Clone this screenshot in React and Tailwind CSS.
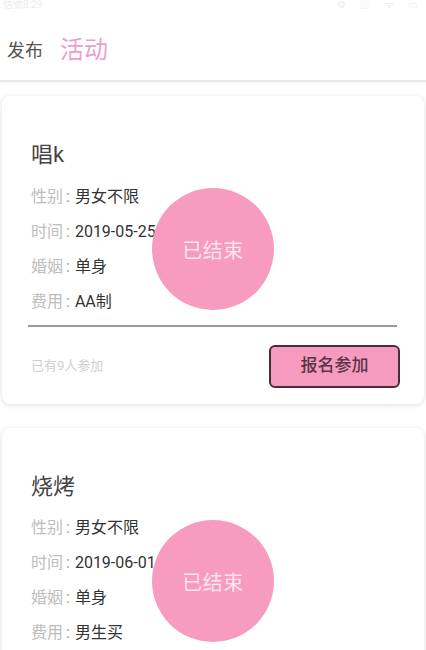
import React from "react";

const font = { fontFamily: 'Roboto, "Noto Sans CJK SC", sans-serif' };

function Row({ label, value }) {
  return (
    <div className="flex items-center h-[35px] pl-[3px] text-[16px]">
      <span className="text-[#bdbdbd]">{label}</span>
      <span className="text-[#9e9e9e] ml-[3px] mr-[5px]">:</span>
      <span className="text-[#333333] text-[16px]">{value}</span>
    </div>
  );
}

function Card({ title, rows, showFooter }) {
  return (
    <div className="relative bg-white rounded-[8px] shadow-[0_1px_5px_rgba(0,0,0,0.14)] px-[26px] pt-[44px] pb-[16px]">
      <div className="pl-[3px] text-[22px] leading-[30px] text-[#444444] mb-[9px]">{title}</div>
      {rows.map((r) => (
        <Row key={r[0]} label={r[0]} value={r[1]} />
      ))}
      <div className="absolute left-[150px] top-[92px] w-[122px] h-[122px] rounded-full bg-[#f79bbf] flex items-center justify-center">
        <span className="text-[20px] text-[#fde6ef] tracking-[0.5px] mt-[4px]">已结束</span>
      </div>
      {showFooter && (
        <>
          <div className="mt-[6px] h-[1.5px] bg-[#9a9a9a] mr-[1px]" />
          <div className="flex items-center justify-between mt-[18px]">
            <span className="pl-[3px] text-[13px] text-[#cfcfcf]">已有9人参加</span>
            <button className="w-[131px] h-[43px] rounded-[6px] border-2 border-[#4a2b3b] bg-[#f59bbd] text-[17px] font-medium text-[#5a3447] mr-[-2px]">
              报名参加
            </button>
          </div>
        </>
      )}
    </div>
  );
}

export default function App() {
  return (
    <div className="w-[426px] h-[650px] overflow-hidden bg-white" style={font}>
      <div className="h-[20px] flex items-start justify-between px-[3px] text-[10px] text-[#ececec]">
        <span className="-mt-[3px]">信號8:29</span>
        <span className="-mt-[3px] tracking-[6px]">⚙ ▥ ᯤ ▭</span>
      </div>
      <div className="h-[62px] flex items-center px-[7px] border-b-2 border-[#e8e8e8] shadow-[0_1px_2px_rgba(0,0,0,0.06)]">
        <span className="text-[18px] text-[#555555]">发布</span>
        <span className="text-[24px] text-[#ec9fcd] ml-[17px]">活动</span>
      </div>
      <div className="px-[2px] pt-[14px] flex flex-col gap-[24px]">
        <Card
          title="唱k"
          rows={[
            ["性别", "男女不限"],
            ["时间", "2019-05-25"],
            ["婚姻", "单身"],
            ["费用", "AA制"],
          ]}
          showFooter
        />
        <Card
          title="烧烤"
          rows={[
            ["性别", "男女不限"],
            ["时间", "2019-06-01"],
            ["婚姻", "单身"],
            ["费用", "男生买"],
          ]}
          showFooter
        />
      </div>
    </div>
  );
}
